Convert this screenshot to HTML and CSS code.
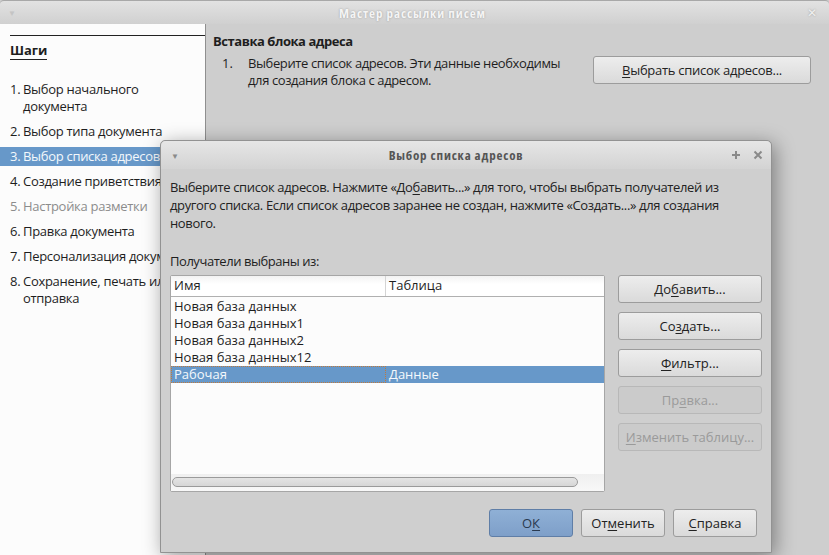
FILE: index.html
```html
<!DOCTYPE html>
<html>
<head>
<meta charset="utf-8">
<link rel="stylesheet" href="styles.css">
</head>
<body>
<div class="window">
  <div class="titlebar">
    <span class="tb-menu">&#9660;</span>
    <span class="tb-title">Мастер рассылки писем</span>
    <span class="tb-close">&#10005;</span>
  </div>
  <div class="main">
    <div class="sidebar">
      <div class="steps-head"><span class="steps-title">Шаги</span></div>
      <ol class="steps">
        <li class="step"><span class="num">1.</span><span class="lbl">Выбор начального документа</span></li>
        <li class="step"><span class="num">2.</span><span class="lbl">Выбор типа документа</span></li>
        <li class="step sel"><span class="num">3.</span><span class="lbl">Выбор списка адресов</span></li>
        <li class="step"><span class="num">4.</span><span class="lbl">Создание приветствия</span></li>
        <li class="step dis"><span class="num">5.</span><span class="lbl">Настройка разметки</span></li>
        <li class="step"><span class="num">6.</span><span class="lbl">Правка документа</span></li>
        <li class="step"><span class="num">7.</span><span class="lbl">Персонализация документа</span></li>
        <li class="step"><span class="num">8.</span><span class="lbl">Сохранение, печать или отправка</span></li>
      </ol>
    </div>
    <div class="content">
      <div class="content-title">Вставка блока адреса</div>
      <div class="content-row">
        <div class="content-num">1.</div>
        <div class="content-text">Выберите список адресов. Эти данные необходимы для создания блока с адресом.</div>
        <button class="btn wide"><u>В</u>ыбрать список адресов...</button>
      </div>
    </div>
  </div>
</div>

<div class="dialog">
  <div class="dlg-titlebar">
    <span class="dlg-menu">&#9660;</span>
    <span class="dlg-title">Выбор списка адресов</span>
    <span class="dlg-ctrl">
      <svg width="10" height="10" viewBox="0 0 10 10"><path d="M5 1v8M1 5h8" stroke="#8a8a8a" stroke-width="2"/></svg>
      <svg width="10" height="10" viewBox="0 0 10 10"><path d="M1.5 1.5l7 7M8.5 1.5l-7 7" stroke="#8a8a8a" stroke-width="2"/></svg>
    </span>
  </div>
  <div class="dlg-body">
    <p class="dlg-desc">Выберите список адресов. Нажмите «До<u>б</u>авить...» для того, чтобы выбрать получателей из другого списка. Если список адресов заранее не создан, нажмите «Создать...» для создания нового.</p>
    <p class="dlg-label">Получатели выбраны из:</p>
    <div class="dlg-mid">
      <div class="listbox">
        <div class="lb-head">
          <div class="col c1">Имя</div>
          <div class="col c2">Таблица</div>
        </div>
        <div class="lb-rows">
          <div class="row"><div class="col c1">Новая база данных</div><div class="col c2"></div></div>
          <div class="row"><div class="col c1">Новая база данных1</div><div class="col c2"></div></div>
          <div class="row"><div class="col c1">Новая база данных2</div><div class="col c2"></div></div>
          <div class="row"><div class="col c1">Новая база данных12</div><div class="col c2"></div></div>
          <div class="row sel"><div class="col c1 focus">Рабочая</div><div class="col c2">Данные</div></div>
        </div>
        <div class="lb-scroll"><div class="thumb"></div></div>
      </div>
      <div class="side-btns">
        <button class="btn">До<u>б</u>авить...</button>
        <button class="btn">Со<u>з</u>дать...</button>
        <button class="btn"><u>Ф</u>ильтр...</button>
        <button class="btn" disabled>Пр<u>а</u>вка...</button>
        <button class="btn" disabled><u>И</u>зменить таблицу...</button>
      </div>
    </div>
    <div class="dlg-foot">
      <button class="btn foot ok">О<u>К</u></button>
      <button class="btn foot">От<u>м</u>енить</button>
      <button class="btn foot"><u>С</u>правка</button>
    </div>
  </div>
</div>
</body>
</html>
```

FILE: styles.css
```css
* { box-sizing: border-box; }
html, body { margin: 0; padding: 0; }
body {
  width: 829px;
  height: 555px;
  overflow: hidden;
  position: relative;
  background: #cecece;
  font-family: "Open Sans", "Noto Sans", sans-serif;
  font-size: 13px;
  color: #1e1e1e;
}
u { text-decoration: underline; text-underline-offset: 2px; }

.window { display: flex; flex-direction: column; height: 555px; }
.titlebar {
  height: 24px;
  flex: none;
  display: flex;
  align-items: center;
  padding: 0 12px 0 8px;
  background: linear-gradient(#e2e2e2, #d0d0d0);
  border-top: 1px solid #a8a8a8;
  border-radius: 4px 4px 0 0;
  color: #e9e9e9;
}
.tb-menu { font-size: 8px; color: #c4c4c4; width: 20px; }
.tb-title {
  flex: 1;
  text-align: center;
  font-stretch: 75%;
  letter-spacing: 0.9px;
  font-size: 13px;
  font-weight: bold;
  color: #f4f4f4;
  text-shadow: 0 0 2px #9a9a9a;
}
.tb-close { width: 20px; text-align: right; font-size: 12px; color: #f0f0f0; text-shadow: 0 0 2px #9a9a9a; }

.main { flex: 1; display: flex; }
.sidebar {
  width: 206px;
  flex: none;
  background: #fcfcfc;
  border-right: 1px solid #8f8f8f;
  padding-top: 11px;
}
.steps-head {
  margin-left: 10px;
  border-top: 1px solid #222;
  padding-top: 5px;
  height: 46px;
}
.steps-title { font-weight: bold; border-bottom: 1px solid #222; line-height: 17px; display: inline-block; }
.steps { list-style: none; margin: 0; padding: 0; display: flex; flex-direction: column; gap: 8px; }
.step { display: flex; line-height: 17px; padding-left: 10px; white-space: nowrap; letter-spacing: -0.3px; }
.step .num { width: 13px; flex: none; }
.step:first-child .lbl { white-space: normal; width: 140px; }
.step:last-child .lbl { white-space: normal; width: 170px; }
.step.sel { background: #6798c9; color: #f4f8fc; padding-top: 1px; padding-bottom: 1px; margin: -1px 0; }
.step.dis { color: #8c8c8c; }

.content { flex: 1; padding: 9px 18px 0 7px; }
.content-title { font-weight: bold; line-height: 17px; letter-spacing: -0.45px; }
.content-row { display: flex; align-items: flex-start; margin-top: 2px; }
.content-num { width: 35px; padding-left: 9px; line-height: 17px; margin-top: 3px; }
.content-text {
  width: 325px;
  line-height: 17px;
  margin-top: 3px;
  letter-spacing: -0.39px;
}

.btn {
  font: inherit;
  font-family: "Open Sans", sans-serif;
  font-size: 13px;
  color: #222;
  height: 28px;
  border: 1px solid #9c9c9c;
  border-radius: 3px;
  background: linear-gradient(#ededed, #dadada);
  padding: 0;
  line-height: 26px;
}
.btn:disabled { background: #cbcbcb; border-color: #b8b8b8; color: #9a9a9a; }
.btn.wide { width: 218px; margin-left: auto; margin-top: 4px; letter-spacing: -0.28px; }

.dialog {
  position: absolute;
  left: 160px;
  top: 140px;
  width: 612px;
  height: 413px;
  background: #cfcfcf;
  border: 1px solid #929292;
  border-radius: 5px 5px 0 0;
  box-shadow: 3px 4px 20px rgba(0,0,0,0.4);
  display: flex;
  flex-direction: column;
}
.dlg-titlebar {
  height: 28px;
  flex: none;
  display: flex;
  align-items: center;
  padding: 0 8px 0 10px;
  background: linear-gradient(#e6e6e6, #d3d3d3);
  border-radius: 5px 5px 0 0;
}
.dlg-menu { font-size: 8px; color: #8a8a8a; width: 40px; }
.dlg-title {
  flex: 1;
  text-align: center;
  font-stretch: 75%;
  letter-spacing: 0.8px;
  font-weight: bold;
  color: #555;
}
.dlg-ctrl { width: 62px; display: flex; justify-content: flex-end; gap: 12px; }
.dlg-body { flex: 1; padding: 9px 9px 0 9px; display: flex; flex-direction: column; }
.dlg-desc {
  margin: 0;
  line-height: 18px;
  letter-spacing: -0.36px;
  color: #222;
  width: 570px;
}
.dlg-label {
  margin: 20px 0 5px;
  line-height: 18px;
  letter-spacing: -0.45px;
}
.dlg-mid { display: flex; gap: 13px; }
.listbox {
  width: 437px;
  height: 217px;
  background: #fcfcfc;
  border: 1px solid #a6a6a6;
  border-radius: 2px;
  display: flex;
  flex-direction: column;
}
.lb-head {
  display: flex;
  height: 21px;
  line-height: 19px;
  background: linear-gradient(#f2f2f2, #ffffff 40%);
  border-bottom: 1px solid #b0b0b0;
}
.lb-head .c1 { border-right: 1px solid #d4d4d4; }
.col { padding-left: 3px; white-space: nowrap; }
.c1 { width: 215px; flex: none; }
.c2 { flex: 1; }
.lb-rows { flex: 1; padding-top: 1px; }
.row { display: flex; height: 17px; line-height: 17px; }
.row.sel { background: #6798c9; color: #f4f8fc; }
.row .focus { outline: 1px dotted #c07a3c; outline-offset: -1px; }
.lb-scroll {
  height: 17px;
  background: linear-gradient(#efefef, #f8f8f8);
  padding: 3px 26px 4px 1px;
}
.thumb {
  height: 10px;
  border: 1px solid #9a9a9a;
  border-radius: 5px;
  background: linear-gradient(#e4e4e4, #d6d6d6);
}
.side-btns { display: flex; flex-direction: column; gap: 9px; width: 144px; }
.side-btns .btn { width: 144px; }
.dlg-foot { display: flex; justify-content: flex-end; gap: 8px; margin-top: 17px; padding-right: 5px; }
.btn.foot { width: 84px; }
.btn.ok { background: linear-gradient(#8fb0d6, #7e9fc9); border-color: #5f7ea7; color: #2a3a50; }
```
